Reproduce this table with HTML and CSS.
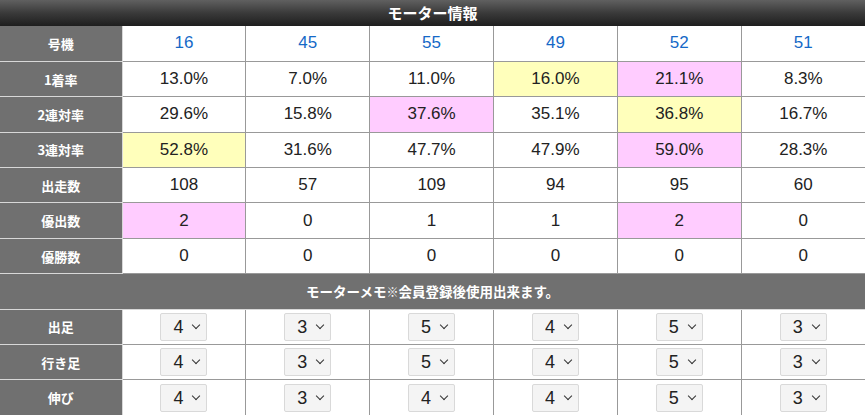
FILE: index.html
```html
<!DOCTYPE html>
<html lang="ja">
<head>
<meta charset="utf-8">
<title>モーター情報</title>
<link rel="stylesheet" href="styles.css">
</head>
<body>
<div class="motor">
  <h2 class="motor-title">モーター情報</h2>
  <table class="motor-table">
    <colgroup>
      <col class="col-label">
      <col><col><col><col><col><col>
    </colgroup>
    <tbody>
      <tr>
        <th>号機</th>
        <td class="num">16</td><td class="num">45</td><td class="num">55</td><td class="num">49</td><td class="num">52</td><td class="num">51</td>
      </tr>
      <tr>
        <th>1着率</th>
        <td>13.0%</td><td>7.0%</td><td>11.0%</td><td class="hl-y">16.0%</td><td class="hl-p">21.1%</td><td>8.3%</td>
      </tr>
      <tr>
        <th>2連対率</th>
        <td>29.6%</td><td>15.8%</td><td class="hl-p">37.6%</td><td>35.1%</td><td class="hl-y">36.8%</td><td>16.7%</td>
      </tr>
      <tr>
        <th>3連対率</th>
        <td class="hl-y">52.8%</td><td>31.6%</td><td>47.7%</td><td>47.9%</td><td class="hl-p">59.0%</td><td>28.3%</td>
      </tr>
      <tr>
        <th>出走数</th>
        <td>108</td><td>57</td><td>109</td><td>94</td><td>95</td><td>60</td>
      </tr>
      <tr>
        <th>優出数</th>
        <td class="hl-p">2</td><td>0</td><td>1</td><td>1</td><td class="hl-p">2</td><td>0</td>
      </tr>
      <tr>
        <th>優勝数</th>
        <td>0</td><td>0</td><td>0</td><td>0</td><td>0</td><td>0</td>
      </tr>
      <tr>
        <th class="memo" colspan="7">モーターメモ<span class="kome">※</span>会員登録後使用出来ます。</th>
      </tr>
      <tr>
        <th>出足</th>
        <td><span class="sel"><select><option>4</option></select></span></td>
        <td><span class="sel"><select><option>3</option></select></span></td>
        <td><span class="sel"><select><option>5</option></select></span></td>
        <td><span class="sel"><select><option>4</option></select></span></td>
        <td><span class="sel"><select><option>5</option></select></span></td>
        <td><span class="sel"><select><option>3</option></select></span></td>
      </tr>
      <tr>
        <th>行き足</th>
        <td><span class="sel"><select><option>4</option></select></span></td>
        <td><span class="sel"><select><option>3</option></select></span></td>
        <td><span class="sel"><select><option>5</option></select></span></td>
        <td><span class="sel"><select><option>4</option></select></span></td>
        <td><span class="sel"><select><option>5</option></select></span></td>
        <td><span class="sel"><select><option>3</option></select></span></td>
      </tr>
      <tr>
        <th>伸び</th>
        <td><span class="sel"><select><option>4</option></select></span></td>
        <td><span class="sel"><select><option>3</option></select></span></td>
        <td><span class="sel"><select><option>4</option></select></span></td>
        <td><span class="sel"><select><option>4</option></select></span></td>
        <td><span class="sel"><select><option>5</option></select></span></td>
        <td><span class="sel"><select><option>3</option></select></span></td>
      </tr>
    </tbody>
  </table>
</div>
</body>
</html>
```
FILE: styles.css
```css
html, body {
  margin: 0;
  padding: 0;
  background: #fff;
}
body {
  font-family: "Liberation Sans", Arial, "Noto Sans CJK JP", sans-serif;
  color: #222;
}
.motor {
  width: 865px;
}
.motor-title {
  margin: 0;
  height: 26px;
  line-height: 25px;
  text-align: center;
  color: #fff;
  font-family: "Noto Sans CJK JP", sans-serif;
  font-weight: bold;
  font-size: 15px;
  background: linear-gradient(to bottom, #606060 0%, #3a3a3a 50%, #1e1e1e 100%);
}
.motor-table {
  width: 100%;
  border-collapse: collapse;
  table-layout: fixed;
}
.col-label {
  width: 122px;
}
.motor-table tr {
  height: 35.4px;
}
.motor-table th,
.motor-table td {
  padding: 0;
  text-align: center;
  vertical-align: middle;
}
.motor-table th {
  background: #707070;
  color: #fff;
  font-family: "Noto Sans CJK JP", sans-serif;
  font-weight: bold;
  font-size: 13px;
  border: 1px solid #d8d8d8;
  border-left: none;
}
.motor-table td {
  font-size: 17px;
  color: #222;
  border: 1px solid #999;
}
.motor-table td:last-child {
  border-right: none;
}
.motor-table tr:first-child th,
.motor-table tr:first-child td {
  border-top: none;
}
.motor-table tr:last-child th,
.motor-table tr:last-child td {
  border-bottom: none;
}
.motor-table td.num {
  color: #1569c7;
}
.hl-y {
  background: #ffffbb;
}
.hl-p {
  background: #ffccff;
}
.motor-table th.memo {
  border-right: none;
  font-size: 13.5px;
}
.kome {
  font-size: 12px;
}
.sel {
  position: relative;
  display: inline-block;
  vertical-align: middle;
}
.sel select {
  appearance: none;
  -webkit-appearance: none;
  width: 47px;
  height: 28px;
  margin: 0;
  padding: 0 0 0 12px;
  background: #f4f4f4;
  border: 1px solid #d9d9d9;
  border-radius: 2px;
  font-family: "Liberation Sans", Arial, sans-serif;
  font-size: 18px;
  color: #222;
  display: block;
}
.sel::after {
  content: "";
  position: absolute;
  right: 8px;
  top: 9px;
  width: 5px;
  height: 5px;
  border-right: 1.7px solid #333;
  border-bottom: 1.7px solid #333;
  transform: rotate(45deg);
  pointer-events: none;
}
```
